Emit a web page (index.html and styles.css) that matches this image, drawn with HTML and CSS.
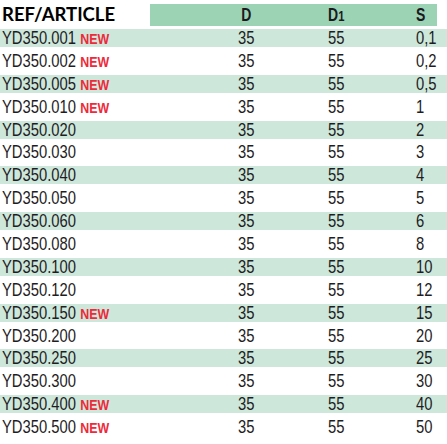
FILE: index.html
```html
<!DOCTYPE html>
<html>
<head>
<meta charset="utf-8">
<link rel="stylesheet" href="styles.css">
</head>
<body>
<div class="table">
  <div class="head">
    <div class="head-ref">REF/ARTICLE</div>
    <div class="head-band">
      <div class="hc c-d"><span class="sq">D</span></div>
      <div class="hc c-d1"><span class="sq">D<span class="sub">1</span></span></div>
      <div class="hc c-s"><span class="sq sl">S</span></div>
    </div>
  </div>
  <div class="row alt"><div class="ref"><span class="sq sl">YD350.001 <b class="new">NEW</b></span></div><div class="c-d"><span class="sq">35</span></div><div class="c-d1"><span class="sq">55</span></div><div class="c-s"><span class="sq sl">0,1</span></div></div>
  <div class="row"><div class="ref"><span class="sq sl">YD350.002 <b class="new">NEW</b></span></div><div class="c-d"><span class="sq">35</span></div><div class="c-d1"><span class="sq">55</span></div><div class="c-s"><span class="sq sl">0,2</span></div></div>
  <div class="row alt"><div class="ref"><span class="sq sl">YD350.005 <b class="new">NEW</b></span></div><div class="c-d"><span class="sq">35</span></div><div class="c-d1"><span class="sq">55</span></div><div class="c-s"><span class="sq sl">0,5</span></div></div>
  <div class="row"><div class="ref"><span class="sq sl">YD350.010 <b class="new">NEW</b></span></div><div class="c-d"><span class="sq">35</span></div><div class="c-d1"><span class="sq">55</span></div><div class="c-s"><span class="sq sl">1</span></div></div>
  <div class="row alt"><div class="ref"><span class="sq sl">YD350.020</span></div><div class="c-d"><span class="sq">35</span></div><div class="c-d1"><span class="sq">55</span></div><div class="c-s"><span class="sq sl">2</span></div></div>
  <div class="row"><div class="ref"><span class="sq sl">YD350.030</span></div><div class="c-d"><span class="sq">35</span></div><div class="c-d1"><span class="sq">55</span></div><div class="c-s"><span class="sq sl">3</span></div></div>
  <div class="row alt"><div class="ref"><span class="sq sl">YD350.040</span></div><div class="c-d"><span class="sq">35</span></div><div class="c-d1"><span class="sq">55</span></div><div class="c-s"><span class="sq sl">4</span></div></div>
  <div class="row"><div class="ref"><span class="sq sl">YD350.050</span></div><div class="c-d"><span class="sq">35</span></div><div class="c-d1"><span class="sq">55</span></div><div class="c-s"><span class="sq sl">5</span></div></div>
  <div class="row alt"><div class="ref"><span class="sq sl">YD350.060</span></div><div class="c-d"><span class="sq">35</span></div><div class="c-d1"><span class="sq">55</span></div><div class="c-s"><span class="sq sl">6</span></div></div>
  <div class="row"><div class="ref"><span class="sq sl">YD350.080</span></div><div class="c-d"><span class="sq">35</span></div><div class="c-d1"><span class="sq">55</span></div><div class="c-s"><span class="sq sl">8</span></div></div>
  <div class="row alt"><div class="ref"><span class="sq sl">YD350.100</span></div><div class="c-d"><span class="sq">35</span></div><div class="c-d1"><span class="sq">55</span></div><div class="c-s"><span class="sq sl">10</span></div></div>
  <div class="row"><div class="ref"><span class="sq sl">YD350.120</span></div><div class="c-d"><span class="sq">35</span></div><div class="c-d1"><span class="sq">55</span></div><div class="c-s"><span class="sq sl">12</span></div></div>
  <div class="row alt"><div class="ref"><span class="sq sl">YD350.150 <b class="new">NEW</b></span></div><div class="c-d"><span class="sq">35</span></div><div class="c-d1"><span class="sq">55</span></div><div class="c-s"><span class="sq sl">15</span></div></div>
  <div class="row"><div class="ref"><span class="sq sl">YD350.200</span></div><div class="c-d"><span class="sq">35</span></div><div class="c-d1"><span class="sq">55</span></div><div class="c-s"><span class="sq sl">20</span></div></div>
  <div class="row alt"><div class="ref"><span class="sq sl">YD350.250</span></div><div class="c-d"><span class="sq">35</span></div><div class="c-d1"><span class="sq">55</span></div><div class="c-s"><span class="sq sl">25</span></div></div>
  <div class="row"><div class="ref"><span class="sq sl">YD350.300</span></div><div class="c-d"><span class="sq">35</span></div><div class="c-d1"><span class="sq">55</span></div><div class="c-s"><span class="sq sl">30</span></div></div>
  <div class="row alt"><div class="ref"><span class="sq sl">YD350.400 <b class="new">NEW</b></span></div><div class="c-d"><span class="sq">35</span></div><div class="c-d1"><span class="sq">55</span></div><div class="c-s"><span class="sq sl">40</span></div></div>
  <div class="row"><div class="ref"><span class="sq sl">YD350.500 <b class="new">NEW</b></span></div><div class="c-d"><span class="sq">35</span></div><div class="c-d1"><span class="sq">55</span></div><div class="c-s"><span class="sq sl">50</span></div></div>
</div>
</body>
</html>
```

FILE: styles.css
```css
html, body {
  margin: 0;
  padding: 0;
  background: #ffffff;
}
.table {
  width: 447px;
  font-family: "Liberation Sans", Arial, sans-serif;
  color: #1f1d24;
}
.head {
  display: grid;
  grid-template-columns: 150px 287px;
  margin-top: 4px;
  margin-bottom: 6.3px;
  height: 18.7px;
}
.head-ref {
  font-family: Lato, "Liberation Sans", sans-serif;
  font-weight: 700;
  font-size: 18.5px;
  line-height: 18.7px;
  color: #000;
  padding-left: 2px;
  padding-top: 1px;
  white-space: nowrap;
}
.head-band {
  background: #9dd3b5;
  display: grid;
  grid-template-columns: 50px 92px 88px 1fr;
}
.head-band::before {
  content: "";
}
.hc {
  font-weight: 700;
  font-size: 17.5px;
  line-height: 18.7px;
  padding-top: 2px;
  color: #1a1a1f;
}
.hc .sq {
  transform: scaleX(0.8);
}
.hc .sq.sl {
  transform-origin: left;
}
.sub {
  font-size: 14px;
}
.row {
  display: grid;
  grid-template-columns: 200px 92px 88px 1fr;
  height: 18px;
  margin-bottom: 4.9px;
  font-size: 18.5px;
  line-height: 18px;
  white-space: nowrap;
}
.row.alt {
  background: #cde7da;
}
.ref {
  padding-left: 2px;
}
.c-d, .c-d1 {
  text-align: center;
}
.c-s {
  padding-left: 36px;
}
.sq {
  display: inline-block;
  transform: scaleX(0.8);
  transform-origin: center;
}
.sq.sl {
  transform-origin: left;
}
.new {
  color: #ee2a3a;
  font-size: 15.5px;
  font-weight: 700;
}
```
